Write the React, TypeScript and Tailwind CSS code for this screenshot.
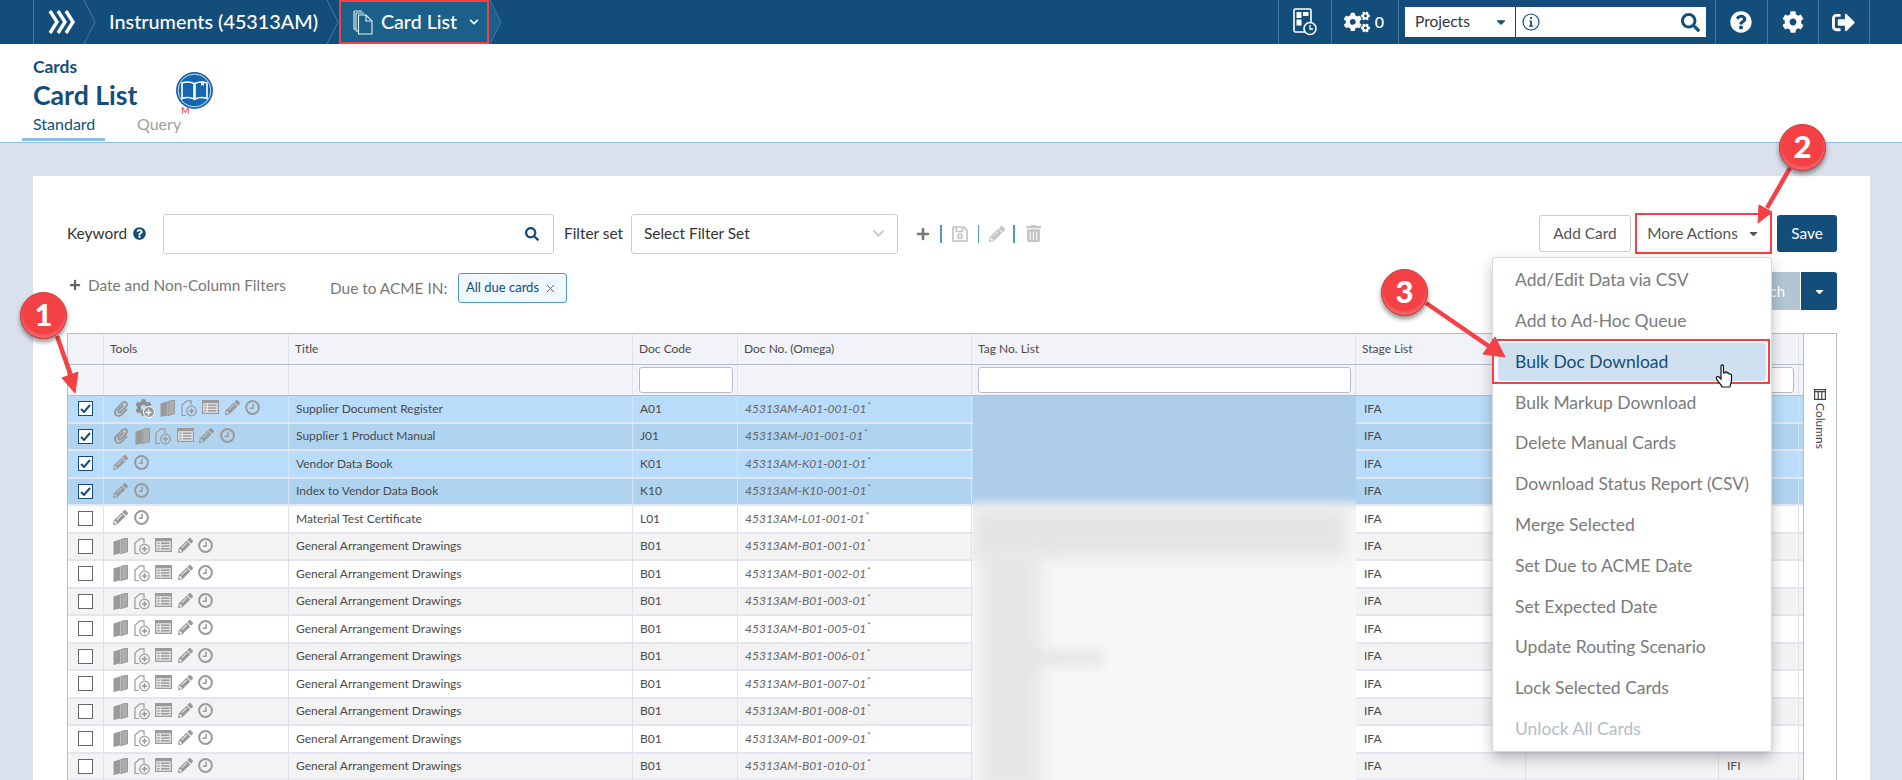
import { FaCaretDown, FaChevronDown, FaCog, FaCogs, FaPaperclip, FaPencilAlt, FaPlus, FaQuestionCircle, FaRegSave, FaSearch, FaSignOutAlt, FaTrashAlt } from "react-icons/fa";

type Tool = "clip" | "gear" | "book" | "doc" | "table" | "pencil" | "clock";

const fullTools: Tool[] = ["book", "doc", "table", "pencil", "clock"];
const shortTools: Tool[] = ["pencil", "clock"];

const rows: { title: string; code: string; no: string; tools: Tool[]; selected?: boolean; last?: string }[] = [
  { title: "Supplier Document Register", code: "A01", no: "45313AM-A01-001-01", tools: ["clip", "gear", "book", "doc", "table", "pencil", "clock"], selected: true },
  { title: "Supplier 1 Product Manual", code: "J01", no: "45313AM-J01-001-01", tools: ["clip", "book", "doc", "table", "pencil", "clock"], selected: true },
  { title: "Vendor Data Book", code: "K01", no: "45313AM-K01-001-01", tools: shortTools, selected: true },
  { title: "Index to Vendor Data Book", code: "K10", no: "45313AM-K10-001-01", tools: shortTools, selected: true },
  { title: "Material Test Certificate", code: "L01", no: "45313AM-L01-001-01", tools: shortTools },
  { title: "General Arrangement Drawings", code: "B01", no: "45313AM-B01-001-01", tools: fullTools },
  { title: "General Arrangement Drawings", code: "B01", no: "45313AM-B01-002-01", tools: fullTools },
  { title: "General Arrangement Drawings", code: "B01", no: "45313AM-B01-003-01", tools: fullTools },
  { title: "General Arrangement Drawings", code: "B01", no: "45313AM-B01-005-01", tools: fullTools },
  { title: "General Arrangement Drawings", code: "B01", no: "45313AM-B01-006-01", tools: fullTools },
  { title: "General Arrangement Drawings", code: "B01", no: "45313AM-B01-007-01", tools: fullTools },
  { title: "General Arrangement Drawings", code: "B01", no: "45313AM-B01-008-01", tools: fullTools },
  { title: "General Arrangement Drawings", code: "B01", no: "45313AM-B01-009-01", tools: fullTools },
  { title: "General Arrangement Drawings", code: "B01", no: "45313AM-B01-010-01", tools: fullTools, last: "IFI" },
];

const menu = [
  "Add/Edit Data via CSV",
  "Add to Ad-Hoc Queue",
  "Bulk Doc Download",
  "Bulk Markup Download",
  "Delete Manual Cards",
  "Download Status Report (CSV)",
  "Merge Selected",
  "Set Due to ACME Date",
  "Set Expected Date",
  "Update Routing Scenario",
  "Lock Selected Cards",
  "Unlock All Cards",
];

const gridCols = "grid grid-cols-[36px_185px_344px_105px_234px_384px_170px_193px_80px_5px]";

function Crumb({ active }: { active?: boolean }) {
  return (
    <svg width="13" height="44" viewBox="0 0 13 44" className="shrink-0">
      {active && <path d="M0 0 L1 0 L12 22 L1 44 L0 44 Z" fill="#1a6088" />}
      <path d="M1 0 L12 22 L1 44" fill="none" stroke="#3f7aa3" strokeWidth="1" />
    </svg>
  );
}

function Logo() {
  return (
    <svg width="28" height="24" viewBox="0 0 28 24" fill="none" stroke="#fff" strokeWidth="3.4">
      <path d="M2 1 L9 12 L2 23" />
      <path d="M10 1 L17 12 L10 23" />
      <path d="M18 1 L25 12 L18 23" />
    </svg>
  );
}

function CardsIcon() {
  return (
    <svg width="20" height="26" viewBox="0 0 20 26" fill="none" stroke="#e8f0f6" strokeWidth="1.1">
      <path d="M1 2 H9 M1 2 V20 H3" />
      <path d="M3 4 H11 M3 4 V22 H5" />
      <path d="M5.5 6 H13 L19 12 V25 H5.5 Z" fill="#1a6088" />
      <path d="M13 6 V12 H19" />
    </svg>
  );
}

function BookBadge() {
  return (
    <svg width="37" height="37" viewBox="0 0 37 37">
      <circle cx="18.5" cy="18.5" r="18.5" fill="#1667ad" />
      <circle cx="18.5" cy="18.5" r="16.4" fill="none" stroke="#fff" strokeWidth="0.8" />
      <path d="M6 11 C10 9.5 14 9.5 18 11.5 V27 C14 25 10 25 6 26.5 Z" fill="none" stroke="#fff" strokeWidth="1.6" />
      <path d="M31 11 C27 9.5 23 9.5 19 11.5 V27 C23 25 27 25 31 26.5 Z" fill="none" stroke="#fff" strokeWidth="1.6" />
      <path d="M25 9.5 H28 V14 L26.5 12.8 L25 14 Z" fill="#fff" />
    </svg>
  );
}

function DashClock() {
  return (
    <svg width="24" height="28" viewBox="0 0 24 28" fill="none" stroke="#fff" strokeWidth="1.6">
      <rect x="1" y="1" width="17" height="23" rx="1.5" />
      <rect x="3.5" y="4" width="5" height="6" fill="#fff" stroke="none" />
      <rect x="10" y="4" width="5.5" height="4" fill="#fff" stroke="none" />
      <rect x="3.5" y="11.5" width="5" height="6" fill="#fff" stroke="none" />
      <circle cx="17" cy="20.5" r="6" fill="#134e7a" />
      <path d="M17 17 V21 H20" strokeWidth="1.3" />
    </svg>
  );
}

function ColumnsIcon() {
  return (
    <svg width="12" height="11" viewBox="0 0 12 11" fill="none" stroke="#444" strokeWidth="1.2">
      <rect x="0.6" y="0.6" width="10.8" height="9.8" />
      <path d="M0.6 2.6 H11.4 M4.2 2.6 V10.4 M7.8 2.6 V10.4" />
    </svg>
  );
}

function BookTool() {
  return (
    <svg width="15" height="17" viewBox="0 0 15 17" fill="#9a9a9a">
      <path d="M0.5 3.5 L7 1.5 V15.5 L0.5 17 Z" />
      <path d="M8 1.5 L14.5 0 V13.5 L8 15.5 Z" fill="#adadad" stroke="#9a9a9a" strokeWidth="1.2" />
    </svg>
  );
}

function DocPlusTool() {
  return (
    <svg width="16" height="17" viewBox="0 0 16 17" fill="none" stroke="#9a9a9a" strokeWidth="1.2">
      <path d="M5 15.5 H1 V5 L6 0.8 H10 V5" />
      <circle cx="10.5" cy="11" r="4.8" />
      <path d="M10.5 8.3 V13.7 M7.8 11 H13.2" strokeWidth="1.6" />
    </svg>
  );
}

function TableTool() {
  return (
    <svg width="17" height="14" viewBox="0 0 17 14" className="mb-[3px]">
      <rect x="0" y="0" width="17" height="14" fill="#9a9a9a" />
      <rect x="1.2" y="3.2" width="14.6" height="9.6" fill="#f7f7f7" fillOpacity="0.8" />
      <path d="M2.5 5.2 H4.5 M6 5.2 H14.5 M2.5 8 H4.5 M6 8 H14.5 M2.5 10.8 H4.5 M6 10.8 H14.5" stroke="#9a9a9a" strokeWidth="1.4" />
    </svg>
  );
}

function ClockTool() {
  return (
    <svg width="15" height="15" viewBox="0 0 15 15" fill="none" stroke="#9a9a9a" className="mb-[2px]">
      <circle cx="7.5" cy="7.5" r="6.4" strokeWidth="2" />
      <path d="M8 3.8 V8.3 H4.8" strokeWidth="1.5" />
    </svg>
  );
}

function ToolIcon({ tool }: { tool: Tool }) {
  switch (tool) {
    case "clip":
      return <FaPaperclip size={16} className="text-[#9a9a9a]" />;
    case "gear":
      return (
        <span className="relative block h-[19px] w-[20px]">
          <FaCog size={17} className="text-[#8f8f8f]" />
          <span className="absolute bottom-0 right-0 flex h-[12px] w-[12px] items-center justify-center rounded-full border border-white bg-[#9a9a9a]">
            <FaPlus size={7} className="text-white" />
          </span>
        </span>
      );
    case "book":
      return <BookTool />;
    case "doc":
      return <DocPlusTool />;
    case "table":
      return <TableTool />;
    case "pencil":
      return <FaPencilAlt size={15} className="mb-[2px] text-[#9a9a9a]" />;
    case "clock":
      return <ClockTool />;
  }
}

function Annotation({ n, className }: { n: string; className: string }) {
  return (
    <div
      className={`absolute flex h-[47px] w-[47px] items-center justify-center rounded-full border border-[#c93a3a] bg-[#f44145] pb-[2px] text-[31px] font-black text-white shadow-[0_3px_5px_rgba(0,0,0,0.45),inset_0_-3px_3px_rgba(255,255,255,0.2)] ${className}`}
    >
      {n}
    </div>
  );
}

export default function App() {
  return (
    <div className="relative flex h-[780px] w-full flex-col overflow-hidden bg-[#dbe1ec] font-['Lato',sans-serif] text-[#333]">
      {/* Top bar */}
      <header className="flex h-[44px] shrink-0 items-center bg-[#134e7a] pl-[33px] text-white">
        <div className="flex h-full items-center border-l border-[#3f7aa3] pl-[14px]">
          <Logo />
          <div className="ml-[7px]">
            <Crumb />
          </div>
        </div>
        <span className="ml-[13px] w-[209px] whitespace-nowrap text-[19.8px] font-medium">Instruments (45313AM)</span>
        <div className="ml-[8px]">
          <Crumb />
        </div>
        <div className="flex h-full w-[150px] items-center bg-[#1a6088] pl-[14px] outline-2 -outline-offset-2 outline-[#f44145]">
          <CardsIcon />
          <span className="ml-[8px] text-[19.6px] font-medium">Card List</span>
          <FaChevronDown size={10} className="ml-[12px]" />
        </div>
        <Crumb active />

        <div className="ml-auto flex h-full items-center border-l border-[#3f7aa3] pl-[14px] pr-[14px]">
          <DashClock />
        </div>
        <div className="flex h-full w-[68px] items-center justify-center gap-[5px] border-l border-r border-[#3f7aa3] pr-[2px] text-[16px] font-medium">
          <FaCogs size={26} />
          0
        </div>
        <div className="ml-[6px] flex h-[30px] w-[301px] items-center bg-white text-[#333]">
          <div className="flex h-full w-[111px] items-center justify-between border-r border-[#134e7a] pl-[10px] pr-[7px] text-[15.5px]">
            Projects
            <FaCaretDown size={14} className="text-[#134e7a]" />
          </div>
          <svg width="18" height="18" viewBox="0 0 18 18" className="ml-[6px]">
            <circle cx="9" cy="9" r="8" fill="none" stroke="#134e7a" strokeWidth="1.2" />
            <path d="M7.2 7.4 H9.9 V12.6 H11 V13.8 H7 V12.6 H8.1 V8.6 H7.2 Z M8.1 4 H9.9 V6 H8.1 Z" fill="#134e7a" />
          </svg>
          <FaSearch size={19} className="ml-auto mr-[6px] text-[#134e7a]" />
        </div>
        <div className="ml-[9px] flex h-full w-[52px] items-center justify-center border-l border-[#3f7aa3] pr-px">
          <FaQuestionCircle size={22} />
        </div>
        <div className="flex h-full w-[51px] items-center justify-center border-l border-[#3f7aa3] pr-px">
          <FaCog size={22} />
        </div>
        <div className="flex h-full w-[52px] items-center justify-center border-l border-r border-[#3f7aa3] pr-px">
          <FaSignOutAlt size={23} />
        </div>
        <div className="w-[32px]" />
      </header>

      {/* Page title */}
      <div className="h-[99px] shrink-0 border-b border-[#8cbfea] bg-white pl-[22px] text-[#134e7a]">
        <div className="pl-[11px] pt-[13px] text-[17.4px] font-bold leading-[20px]">Cards</div>
        <div className="flex items-start pl-[11px]">
          <h1 className="mt-[2px] text-[26.6px] font-bold leading-[32px]">Card List</h1>
          <div className="relative -mt-[5px] ml-[39px]">
            <BookBadge />
            <span className="absolute left-[5px] top-[34px] text-[9px] leading-[10px] text-[#e33]">M</span>
          </div>
        </div>
        <div className="mt-[3px] flex text-[16px] leading-[20px]">
          <div className="h-[27px] w-[83px] border-b-[3px] border-[#8cbfea] pl-[11px] text-[#134e7a]">Standard</div>
          <div className="ml-[32px] text-[#a09e9e]">Query</div>
        </div>
      </div>

      {/* Main card */}
      <main className="flex min-h-0 flex-1 flex-col pl-[33px] pr-[32px] pt-[33px]">
        <div className="flex min-h-0 flex-1 flex-col bg-white px-[34px] pr-[33px] pt-[37px]">
          <div className="flex h-[41px] shrink-0 items-center">
            <span className="w-[60px] whitespace-nowrap text-[15.4px] text-[#333]">Keyword</span>
            <FaQuestionCircle size={13} className="ml-[6px] text-[#134e7a]" />
            <div className="ml-[17px] flex h-[40px] w-[391px] items-center justify-end rounded-[3px] border border-[#ccc] pr-[14px]">
              <FaSearch size={14} className="text-[#134e7a]" />
            </div>
            <span className="ml-[10px] w-[59px] whitespace-nowrap text-[15.4px]">Filter set</span>
            <div className="ml-[8px] flex h-[40px] w-[267px] items-center justify-between rounded-[3px] border border-[#ccc] pl-[12px] pr-[12px] text-[15.4px]">
              Select Filter Set
              <FaChevronDown size={13} className="text-[#ccc]" />
            </div>
            <FaPlus size={14} className="ml-[18px] text-[#777]" />
            <div className="ml-[10px] h-[18px] w-[1.5px] bg-[#4a9cc7]" />
            <FaRegSave size={18} className="ml-[9px] text-[#c4c4c4]" />
            <div className="ml-[9px] h-[18px] w-[1.5px] bg-[#4a9cc7]" />
            <FaPencilAlt size={16} className="ml-[10px] text-[#c4c4c4]" />
            <div className="ml-[8px] h-[18px] w-[1.5px] bg-[#4a9cc7]" />
            <FaTrashAlt size={17} className="ml-[10px] text-[#c4c4c4]" />
            <div className="ml-auto flex items-center">
              <button className="h-[37px] w-[92px] rounded-[3px] border border-[#ccc] text-[15.4px] text-[#555]">Add Card</button>
              <div className="relative ml-[6px]">
                <button className="flex h-[37px] w-[133px] items-center justify-center gap-[9px] text-[15.4px] text-[#555] outline-2 outline-[#f44145]">
                  More Actions
                  <FaCaretDown size={13} />
                </button>
                <div className="absolute left-[-145px] top-[42px] z-20 w-[280px] rounded-[3px] border border-[#d8d8d8] bg-white pb-[1px] pt-[2px] shadow-[0_6px_14px_rgba(0,0,0,0.25)]">
                  {menu.map((item) => (
                    <div key={item} className="flex h-[40.8px] items-center">
                      {item === "Bulk Doc Download" ? (
                        <div className="relative mx-[5px] flex h-[38px] w-full items-center rounded-[4px] bg-[#cfe1f0] pl-[17px] text-[17.5px] text-[#134e7a]">
                          {item}
                          <div className="absolute -left-[6px] -right-[4px] -top-[4px] -bottom-[3px] border-2 border-[#f44145]" />
                          <svg width="18" height="24" viewBox="0 0 18 24" className="absolute left-[217px] top-[21px] z-10">
                            <path d="M6 2 C6 0.5 8.5 0.5 8.5 2 V9 L10 9 V8.5 C10 7.5 12 7.5 12 8.5 V9.5 C12 8.6 14 8.6 14 9.7 V10.5 C14 9.7 16.5 9.8 16.5 11 V16 C16.5 19 15 21 15 23 H7 C6 20 3 18 1.5 15 C0.5 13 2.5 11.8 4 13 L6 15 Z" fill="#fff" stroke="#111" strokeWidth="1.2" />
                          </svg>
                        </div>
                      ) : (
                        <span className={`pl-[22px] text-[17.5px] ${item === "Unlock All Cards" ? "text-[#b4bcc6]" : "text-[#7b7b7b]"}`}>{item}</span>
                      )}
                    </div>
                  ))}
                </div>
              </div>
              <button className="ml-[7px] h-[37px] w-[60px] rounded-[3px] bg-[#134e7a] text-[15.4px] text-white">Save</button>
            </div>
          </div>

          <div className="mt-[19px] flex h-[33px] shrink-0 items-start">
            <FaPlus size={12} className="ml-[2px] mt-[6px] text-[#666]" />
            <span className="ml-[7px] w-[197px] whitespace-nowrap text-[15.4px] leading-[24px] text-[#777]">Date and Non-Column Filters</span>
            <span className="ml-[45px] mt-[3px] w-[117px] whitespace-nowrap text-[15.4px] leading-[24px] text-[#777]">Due to ACME IN:</span>
            <div className="ml-[11px] flex h-[30px] w-[109px] items-center rounded-[3px] border border-[#4a9cc7] bg-[#f1f8fd] pl-[7px] text-[13px] text-[#134e7a]">
              All due cards
              <svg width="9" height="9" viewBox="0 0 9 9" fill="none" stroke="#666" strokeWidth="1" className="ml-[7px]">
                <path d="M1 1 L8 8 M8 1 L1 8" />
              </svg>
            </div>
            <div className="ml-auto flex h-[38px] -translate-y-[1px] items-stretch text-[15px]">
              <div className="flex w-[80px] items-center justify-end rounded-l-[3px] bg-[#b2c5d3] pr-[15px] text-white">Search</div>
              <div className="ml-px flex w-[36px] items-center justify-center rounded-r-[3px] bg-[#134e7a] text-white">
                <FaCaretDown size={13} />
              </div>
            </div>
          </div>

          {/* Table */}
          <div className="relative mt-[27px] flex min-h-0 flex-1 overflow-hidden border-l border-t border-[#b4bccb]">
            <div className="w-[1735px] shrink-0 text-[12px] text-[#4a4a4a]">
              <div className={`${gridCols} h-[31px] border-b border-[#b4bccb] bg-[#f1f3f9]`}>
                {["", "Tools", "Title", "Doc Code", "Doc No. (Omega)", "Tag No. List", "Stage List", "", "", ""].map((h, i) => (
                  <div key={i} className="flex items-center border-r border-[#dfe2ea] pl-[6px]">{h}</div>
                ))}
              </div>
              <div className={`${gridCols} h-[31px] border-b border-[#b4bccb] bg-[#f1f3f9]`}>
                {[0, 1, 2, 3, 4, 5, 6, 7, 8, 9].map((i) => (
                  <div key={i} className="flex items-center border-r border-[#dfe2ea] pl-[6px] pr-[4px]">
                    {(i === 3 || i === 5 || i === 8) && <div className="h-[26px] w-full rounded-[3px] border border-[#b4bccb] bg-white" />}
                  </div>
                ))}
              </div>
              {rows.map((r, i) => {
                const bg = r.selected ? (i % 2 ? "bg-[#b0d3f0]" : "bg-[#b9dcfa]") : i % 2 ? "bg-[#f3f3f3]" : "bg-white";
                const cell = `flex items-center border-r ${r.selected ? "border-[#d3e6f6]" : "border-[#dfe2ea]"} pl-[7px]`;
                return (
                  <div key={r.no} className={`${gridCols} h-[27.5px] border-b-2 border-[#e3e6f0] ${bg}`}>
                    <div className={`${cell} pl-[10px]`}>
                      <span className={`flex h-[15px] w-[15px] items-center justify-center border bg-white ${r.selected ? "border-[#134e7a]" : "border-[#666]"}`}>
                        {r.selected && (
                          <svg width="11" height="9" viewBox="0 0 11 9" fill="none" stroke="#134e7a" strokeWidth="2">
                            <path d="M1 5 L4 8 L10 1" />
                          </svg>
                        )}
                      </span>
                    </div>
                    <div className={`${cell} gap-[5.5px] pl-[9px]`}>
                      {r.tools.map((t) => (
                        <ToolIcon key={t} tool={t} />
                      ))}
                    </div>
                    <div className={cell}>{r.title}</div>
                    <div className={cell}>{r.code}</div>
                    <div className={`${cell} italic text-[#666]`}>
                      {r.no}
                      <sup className="ml-px text-[8px] not-italic">*</sup>
                    </div>
                    <div className={cell} />
                    <div className={`${cell} pl-[8px]`}>IFA</div>
                    <div className={cell} />
                    <div className={`${cell} pl-[8px]`}>{r.last}</div>
                    <div />
                  </div>
                );
              })}
            </div>

            {/* Redacted tag numbers */}
            <div className="absolute bottom-0 left-[905px] top-[62px] w-[383px] overflow-hidden bg-[#f7f7f7]">
              <div className="absolute -left-[10px] -right-[10px] -top-[10px] h-[118px] bg-[#aecde8] blur-[5px]" />
              <div className="absolute left-0 right-[10px] top-[112px] h-[50px] bg-[#e4e4e4] blur-[8px]" />
              <div className="absolute left-[8px] top-[150px] bottom-[-10px] w-[60px] bg-[#e6e6e6] blur-[8px]" />
              <div className="absolute left-[30px] top-[255px] h-[14px] w-[100px] bg-[#e4e4e4] blur-[6px]" />
            </div>

            <div className="flex w-[34px] shrink-0 flex-col items-center border-l border-r border-[#b4bccb] bg-white pt-[55px]">
              <ColumnsIcon />
              <span className="mt-[3px] text-[12px] text-[#444] [writing-mode:vertical-rl]">Columns</span>
            </div>
          </div>
        </div>
      </main>

      {/* Annotations */}
      <svg className="pointer-events-none absolute left-0 top-0 z-30" width="1902" height="780" fill="#f44145" stroke="#f44145">
        <path d="M57 336 L71 376" strokeWidth="4.5" />
        <path d="M62 378 L78 372 L75 393 Z" />
        <path d="M1790 168 L1767 208" strokeWidth="4.5" />
        <path d="M1759 205 L1772 212 L1758 223 Z" />
        <path d="M1426 303 L1490 347" strokeWidth="4.5" />
        <path d="M1483 354 L1495 337 L1505 357 Z" />
      </svg>
      <div className="z-40">
        <Annotation n="1" className="left-[20px] top-[292px]" />
        <Annotation n="2" className="left-[1779px] top-[124px]" />
        <Annotation n="3" className="left-[1381px] top-[269px]" />
      </div>
    </div>
  );
}
